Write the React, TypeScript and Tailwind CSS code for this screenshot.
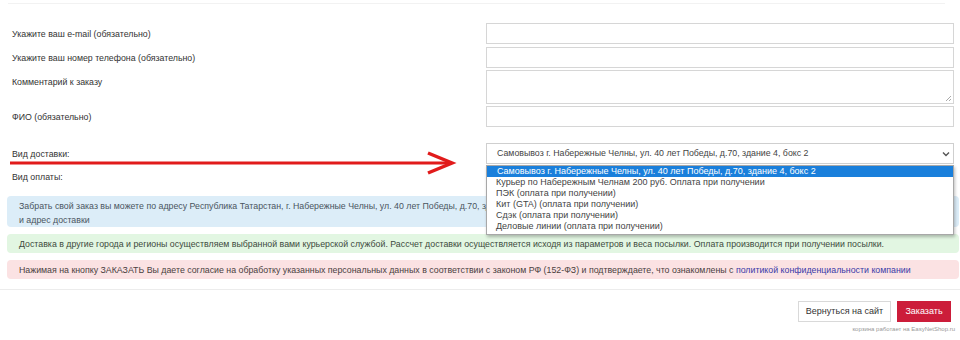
import React from 'react';

const deliveryOptions = [
  'Самовывоз г. Набережные Челны, ул. 40 лет Победы, д.70, здание 4, бокс 2',
  'Курьер по Набережным Челнам 200 руб. Оплата при получении',
  'ПЭК (оплата при получении)',
  'Кит (GTA) (оплата при получении)',
  'Сдэк (оплата при получении)',
  'Деловые линии (оплата при получении)',
];

const FieldRow: React.FC<{ label: string; className?: string; top?: boolean; children: React.ReactNode }> = ({
  label,
  className,
  top,
  children,
}) => (
  <div className={`flex ${top ? 'items-start' : 'items-center'} ${className ?? ''}`}>
    <div className={`w-[486px] pl-[12px] ${top ? 'pt-[6px]' : 'pt-[2px]'}`}>{label}</div>
    <div className="w-[468px]">{children}</div>
  </div>
);

const Chevron = () => (
  <svg width="8" height="6" viewBox="0 0 8 6" className="text-[#555]">
    <path d="M1 1.5 L4 4.5 L7 1.5" fill="none" stroke="currentColor" strokeWidth="1.4" />
  </svg>
);

export default function App() {
  return (
    <div className="relative w-[960px] h-[340px] overflow-hidden bg-white font-['Liberation_Sans',Arial,sans-serif] text-[8.8px] leading-[13px] text-[#333]">
      <div className="mx-[8px] mr-[15px] h-[4px] border-b border-[#f2f2f2]" />

      <div className="pt-[19px]">
        <FieldRow label="Укажите ваш e-mail (обязательно)">
          <div className="h-[21px] border border-[#d6d6d6] bg-white" />
        </FieldRow>
        <FieldRow label="Укажите ваш номер телефона (обязательно)" className="mt-[3px]">
          <div className="h-[21px] border border-[#d6d6d6] bg-white" />
        </FieldRow>
        <FieldRow label="Комментарий к заказу" className="mt-[2px]" top>
          <div className="relative h-[34px] border border-[#d6d6d6] bg-white">
            <svg width="7" height="7" viewBox="0 0 7 7" className="absolute right-[1px] bottom-[1px]">
              <path d="M6 1 L1 6 M6 4 L4 6" stroke="#aaa" strokeWidth="1" />
            </svg>
          </div>
        </FieldRow>
        <FieldRow label="ФИО (обязательно)" className="mt-[2px]">
          <div className="h-[21px] border border-[#d6d6d6] bg-white" />
        </FieldRow>
        <FieldRow label="Вид доставки:" className="mt-[16px]">
          <div className="relative">
            <div className="flex h-[21px] items-center justify-between border border-[#cfcfcf] bg-white pl-[10px] pr-[3px] text-[#444]">
              <span>{deliveryOptions[0]}</span>
              <Chevron />
            </div>
            <div className="absolute left-0 right-0 top-[22px] z-10 border border-[#a8a8a8] bg-white pb-[2px] text-[9px] leading-[11px] text-[#444] shadow-[1px_2px_3px_rgba(0,0,0,0.25)]">
              {deliveryOptions.map((opt, i) => (
                <div key={opt} className={i === 0 ? 'bg-[#1a7fdb] pl-[10px] text-white' : 'pl-[9px]'}>
                  {opt}
                </div>
              ))}
            </div>
          </div>
        </FieldRow>
        <FieldRow label="Вид оплаты:" className="mt-[2px]">
          <div className="h-[21px] border border-[#cfcfcf] bg-white" />
        </FieldRow>
      </div>

      <div className="mt-[9px] ml-[7px] mr-[1px] flex flex-col leading-[14px]">
        <div className="rounded-[4px] bg-[#dcedf8] px-[12px] pt-[3px] pb-0 text-[#4a5560]">
          <div className="whitespace-nowrap">
            Забрать свой заказ вы можете по адресу Республика Татарстан, г. Набережные Челны, ул. 40 лет Победы, д.70, здание 4, бокс 2. Для доставки укажите время
          </div>
          <div>и адрес доставки</div>
        </div>
        <div className="mt-[7px] rounded-[4px] bg-[#e2f6e2] px-[12px] pt-[3px] pb-[2px] text-[#3d4a3d]">
          Доставка в другие города и регионы осуществляем выбранной вами курьерской службой. Рассчет доставки осуществляется исходя из параметров и веса посылки. Оплата производится при получении посылки.
        </div>
        <div className="mt-[7px] rounded-[4px] bg-[#fbe2e3] px-[12px] pt-[3px] pb-[2px] text-[#4a3f3f]">
          Нажимая на кнопку ЗАКАЗАТЬ Вы даете согласие на обработку указанных персональных данных в соответствии с законом РФ (152-ФЗ) и подтверждаете, что ознакомлены с{' '}
          <a className="text-[#3a3aa8]">политикой конфиденциальности компании</a>
        </div>
      </div>

      <div className="mt-[10px] border-t border-[#ececec]" />

      <div className="mt-[11px] flex justify-end gap-[6px] pr-[9px]">
        <button className="h-[21px] w-[93px] border border-[#d9d9d9] bg-white text-[9px] text-[#333]">
          Вернуться на сайт
        </button>
        <button className="h-[21px] w-[54px] bg-[#cc1d3a] text-[9px] text-white">Заказать</button>
      </div>
      <div className="mt-[3px] pr-[5px] text-right text-[6px] leading-[8px] text-[#999]">
        корзина работает на EasyNetShop.ru
      </div>

      <svg className="pointer-events-none absolute left-0 top-0" width="960" height="340">
        <line x1="10" y1="163" x2="450" y2="163" stroke="#e11b1b" strokeWidth="3" />
        <polyline points="428,153 452,163 428,173" fill="none" stroke="#e11b1b" strokeWidth="3.5" />
      </svg>
    </div>
  );
}
